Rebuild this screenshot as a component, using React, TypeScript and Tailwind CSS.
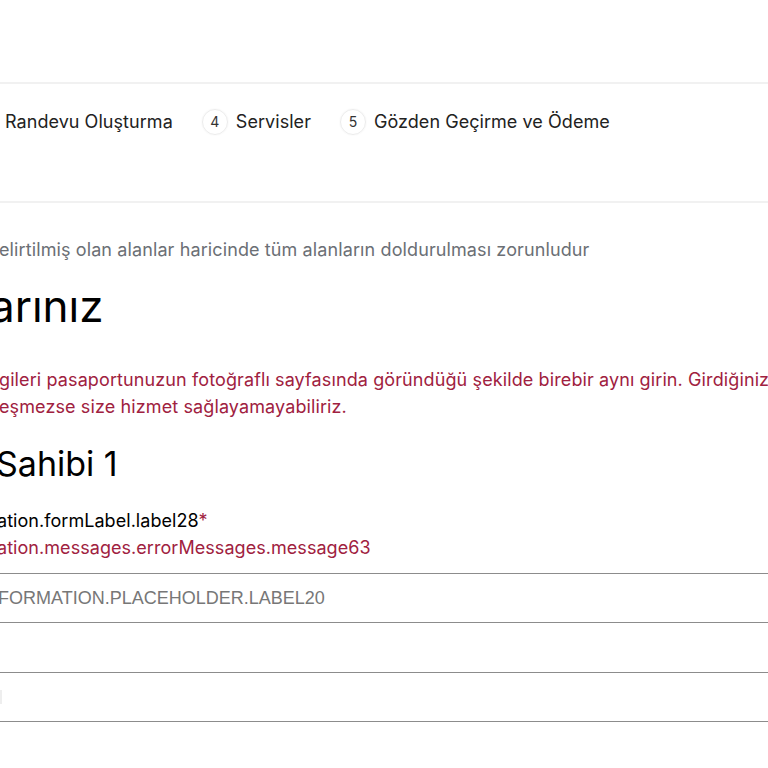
import React from "react";

function StepCircle({ n }: { n: string }) {
  return (
    <span className="flex h-[26px] w-[26px] items-center justify-center rounded-full border border-[#ececec] text-[14px] text-[#333] shadow-[0_0_2px_rgba(0,0,0,0.06)]">
      {n}
    </span>
  );
}

export default function App() {
  return (
    <div
      className="h-[768px] w-[768px] overflow-hidden bg-white text-black"
      style={{ fontFamily: "Inter, 'Noto Sans', sans-serif" }}
    >
      <div className="h-[82px]" />
      <div className="h-[121px] border-y-2 border-[#f1f1f1]">
        <div className="flex items-center pl-[5px] pt-[24px] text-[18px] tracking-[0.05px] text-[#222]">
          <span>Randevu Oluşturma</span>
          <span className="ml-[29px] flex items-center gap-[8px]">
            <StepCircle n="4" />
            <span>Servisler</span>
          </span>
          <span className="ml-[29px] flex items-center gap-[8px]">
            <StepCircle n="5" />
            <span>Gözden Geçirme ve Ödeme</span>
          </span>
        </div>
      </div>

      <div className="pt-[34px]">
        <p className="-ml-[1px] whitespace-nowrap text-[18px] leading-[26px] tracking-[0.11px] text-[#6b6f75]">
          elirtilmiş olan alanlar haricinde tüm alanların doldurulması zorunludur
        </p>
        <h1 className="-ml-[10px] mt-[17px] whitespace-nowrap text-[44px] leading-[52px] font-normal">
          arınız
        </h1>
        <p className="-ml-[1px] mt-[34px] whitespace-nowrap text-[18px] leading-[27px] tracking-[0.11px] text-[#a02140]">
          gileri pasaportunuzun fotoğraflı sayfasında göründüğü şekilde birebir aynı girin. Girdiğiniz
          <br />
          eşmezse size hizmet sağlayamayabiliriz.
        </p>
        <h2 className="-ml-[4px] mt-[23px] whitespace-nowrap text-[34px] leading-[42px] font-normal">
          Sahibi 1
        </h2>
        <div className="mt-[22px] whitespace-nowrap text-[18px] leading-[27px] tracking-[0.05px]">
          <div className="-ml-[3px]">
            ation.formLabel.label28<span className="text-[#a02140]">*</span>
          </div>
          <div className="-ml-[3px] text-[#a02140]">
            ation.messages.errorMessages.message63
          </div>
        </div>
        <div className="mt-[12px] flex flex-col">
          <div className="flex h-[49px] items-center border-t border-[#8c8c8c] bg-white">
            <span
              className="-ml-[2px] whitespace-nowrap text-[18px] text-[#777]"
              style={{ fontFamily: "'Liberation Sans', Arial, sans-serif" }}
            >
              FORMATION.PLACEHOLDER.LABEL20
            </span>
          </div>
          <div className="flex h-[50px] items-center border-t border-[#8c8c8c] bg-white" />
          <div className="flex h-[50px] items-center border-y border-[#8c8c8c] bg-white">
            <span className="-ml-[2px] h-[14px] w-[4px] bg-[#eeeeee]" />
          </div>
        </div>
      </div>
    </div>
  );
}
